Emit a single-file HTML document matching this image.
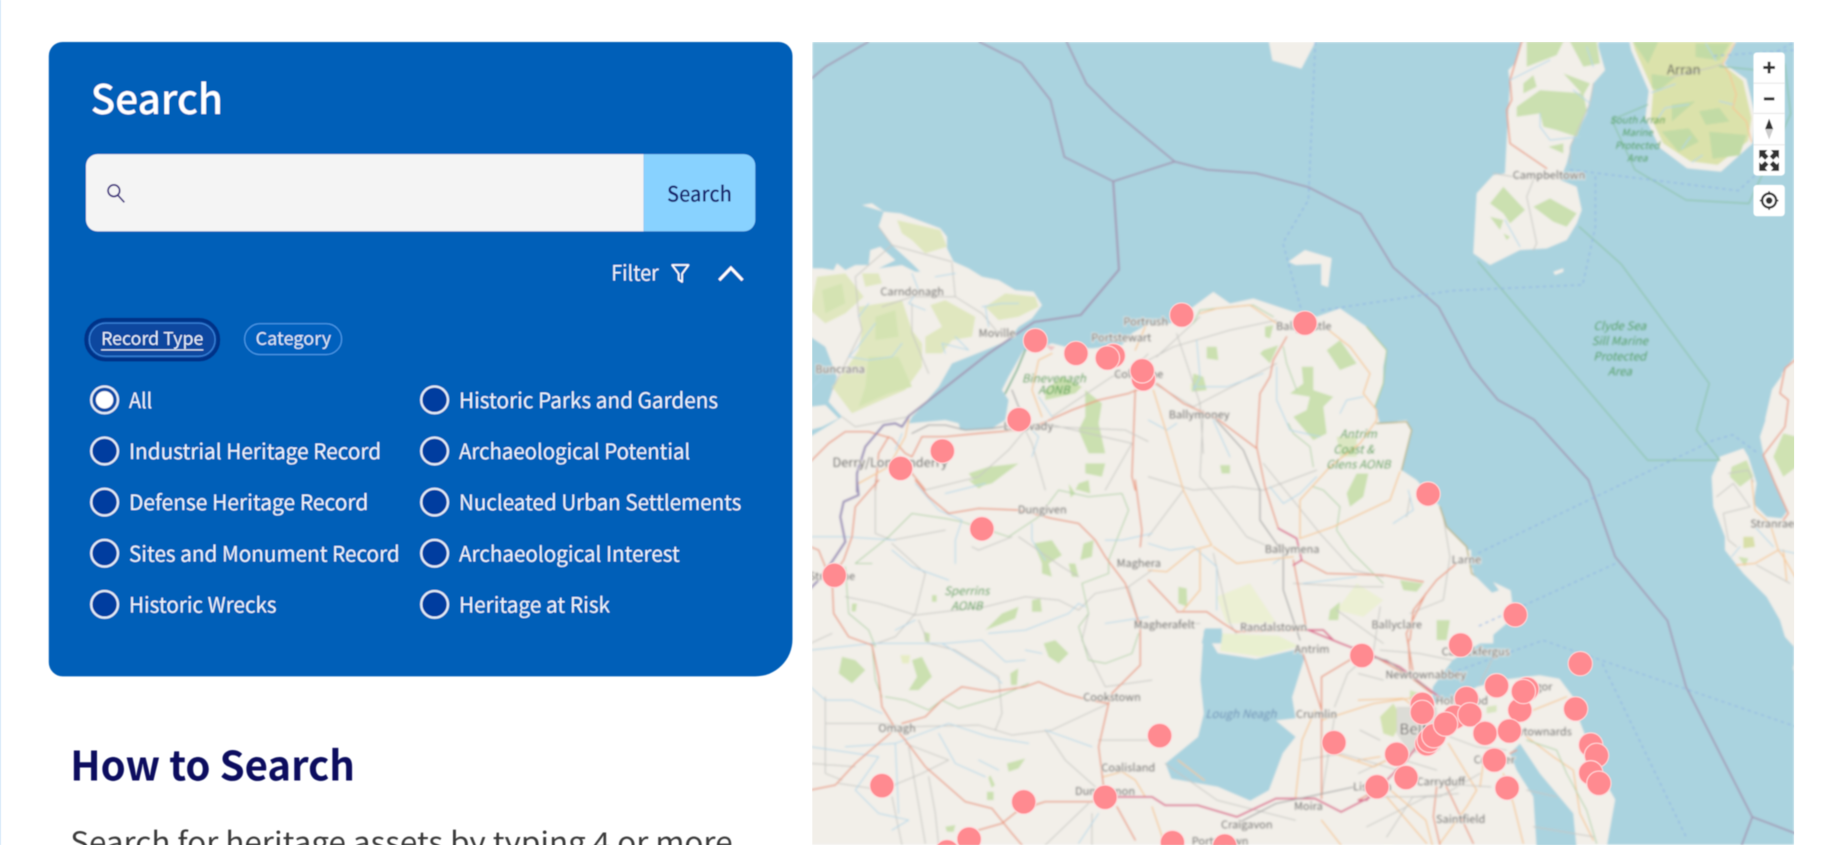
<!DOCTYPE html>
<html><head><meta charset="utf-8"><title>Search</title>
<style>
html,body{margin:0;padding:0;background:#fff;width:1822px;height:845px;overflow:hidden}
svg{display:block}
.z *{vector-effect:non-scaling-stroke;fill:none;stroke-linejoin:round;stroke-linecap:round}
text{font-family:"Noto Sans CJK JP","Liberation Sans",sans-serif}
.l{font-size:9.5px;fill:#4f4f4f;text-anchor:middle;stroke:#f2efe9;stroke-width:1.5px;paint-order:stroke}
.g{font-size:10px;fill:#3c9a3c;text-anchor:middle;font-style:italic}
.o{font-size:18px;fill:#eef4fb}
.rd{stroke:#ea9a80;stroke-width:1.4}
.pk{stroke:#dc6f92;stroke-width:1.8}
.or{stroke:#f5c894;stroke-width:1.3}
.gy{stroke:#c6c6c2;stroke-width:1}
.dg{stroke:#a3a3a3;stroke-width:1.2}
.bl{stroke:#b2d7e8;stroke-width:1}
.gn{stroke:#aed0a4;stroke-width:1}
</style></head><body>
<svg width="1822" height="845" viewBox="0 0 1568 727" xmlns="http://www.w3.org/2000/svg">
<defs>
<filter id="b" x="0" y="0" width="1" height="1"><feGaussianBlur stdDeviation="0.9"/></filter>
<filter id="b2" x="-5%" y="-5%" width="110%" height="110%"><feGaussianBlur stdDeviation="0.45"/></filter>
<clipPath id="mc"><rect x="699" y="36" width="845" height="691"/></clipPath>
</defs>
<rect width="1568" height="727" fill="#fff"/>
<rect x="0" y="0" width="1" height="727" fill="#dcecfa"/>

<g clip-path="url(#mc)">
<g filter="url(#b)">
<rect x="699" y="36" width="845" height="691" fill="#aad3df"/>

<!-- land base -->
<g fill="#f2efe9">
<rect x="698" y="413" width="292" height="314"/>
<rect x="989" y="540" width="210" height="187"/>
<path d="M1266 473L1266 488 1275 496 1300 508 1303 531 1283 548 1250 568 1233 591 1233 605 1256 600 1271 591 1293 585 1325 581 1342 584 1354 600 1360 622 1377 665 1390 688 1383 727 1190 727 1190 480Z"/>
<path d="M1092 36L1095 52 1120 59 1132 36Z"/>
<path d="M1109 225L1123 215 1146 222 1143 247 1137 245 1137 227 1115 228Z"/>
<path d="M1545 307L1525 335 1519 361 1525 361 1545 355Z"/>
<path d="M1543 575l2-8v14Z"/>
</g>

<!-- Arran -->
<g transform="translate(1342.500,34.400) scale(.2917)">
<path fill="#f2efe9" d="M205 5L520 5 485 70 550 115 578 230 568 305 475 388 375 378 295 318 252 230 262 150 210 30Z"/>
<path fill="#dbe2ab" d="M215 5L512 5 478 70 540 120 565 230 555 298 465 368 385 358 305 305 268 230 275 150 222 30Z"/>
<g fill="#c2dba5">
<path d="M270 100L340 110 290 150 272 140Z"/>
<path d="M330 190L400 180 330 240Z"/>
<path d="M300 270L380 260 410 300 350 330Z"/>
<path d="M410 210L470 200 500 240 430 250Z"/>
<path d="M440 270L550 280 530 340 450 350Z"/>
<path d="M400 10L500 10 470 60 400 50Z"/>
<path d="M215 5L290 5 260 70Z"/>
</g>
</g>
<g class="z" transform="translate(1342.500,34.400) scale(.2917)">
<path class="or" d="M515 10L480 70 500 100 520 160 510 200 550 240 565 300"/>
<path class="gy" d="M325 110L450 80 480 70"/>
<path class="bl" d="M270 155L340 130M290 230L310 200 380 190M510 190L470 180M430 10L460 60M360 320L385 285M390 360L420 340"/>
</g>

<!-- crop A: Inishowen & north coast -->
<g transform="translate(698.8,163.5) scale(.2868)">
<path fill="#f2efe9" d="M-5 235L30 235 65 240 75 220 100 240 130 225 170 225 175 180 205 170 250 210 200 235 270 225 310 245 325 245 300 220 240 165 200 110 215 65 150 45 180 40 215 65 265 70 385 115 405 140 405 175 425 215 470 235 510 260 560 270 610 300 665 305 690 345 660 385 620 410 590 450 520 480 420 520 380 590 320 660 300 680 290 700 345 695 400 690 440 700 445 720 540 715 580 690 590 630 570 600 590 560 635 480 660 480 720 460 760 470 840 475 930 465 960 430 1020 395 1025 910 -5 910Z"/>
<path fill="#aad3df" d="M-5 440L40 470 75 560 50 635 90 680 60 700 -5 740Z"/>
<path fill="#f2efe9" d="M-5 650L40 645 80 685 30 710 -5 720Z"/>
<g fill="#e0e7bf">
<path d="M255 90L385 120 405 170 340 190 300 150 270 130Z"/>
<path d="M15 260L100 250 155 320 100 370 40 400 -5 360Z"/>
<path d="M150 250L200 250 210 280 160 290Z"/>
<path d="M140 350L270 330 300 420 330 460 330 530 280 600 210 630 120 670 60 590 100 540 140 480 150 420Z"/>
<path d="M355 345L400 330 490 380 480 440 420 450 390 490 340 490 340 440 390 410Z"/>
<path d="M520 350L580 310 670 320 680 350 620 380 560 390Z"/>
</g>
<g fill="#d4e3b2">
<path d="M170 500L260 500 300 590 230 610 140 650 160 590Z"/>
<path d="M30 300L90 280 100 340 40 370Z"/>
<path d="M190 380L250 360 260 440 190 450Z"/>
</g>
<g fill="#cbe0b0">
<path d="M700 600L750 560 810 590 790 610 700 630Z"/>
<path d="M820 600L870 640 860 700 880 790 830 790 800 720 820 680Z"/>
<path d="M820 820L880 820 870 860 820 850Z"/>
<path d="M470 850L530 830 620 820 540 880 500 890Z"/>
<path d="M800 880L830 870 830 900 790 900Z"/>
</g>
<path fill="#eec4c4" d="M700 465l30 5-12 12Z"/>
</g>
<g class="z" transform="translate(698.8,163.5) scale(.2868)">
<path class="rd" d="M-5 815L50 760 100 725 170 725 240 745 280 790 300 800 330 740 400 740 500 730 620 720 690 700 780 660 860 630 950 610 1020 580M300 850L340 900M970 600L960 860 970 900M230 740L200 790 190 900"/>
<path class="gy" d="M640 720L660 760 700 900M640 720L590 780 500 860 340 900M700 700L960 760M720 710L940 720 1020 760M720 680L900 560 960 540M300 340L300 430 350 550M420 220L430 320 510 370 560 430M200 110L240 165 420 215M240 165L130 260 140 380 150 420 110 500 60 600M210 350L300 320 370 320 430 320M90 680L130 710 290 680M880 900L960 760M960 540L1020 480"/>
<path class="dg" d="M300 730L350 705 400 705 460 720 540 715 640 700M640 700L600 600"/>
<path class="bl" d="M300 250L320 300 290 340 340 360M170 340L140 380M190 400L130 480 110 500 170 510 240 500 270 460M370 260L430 250M430 440L470 480 390 460 400 490M510 350L570 340 620 340M520 350L530 410M640 700L680 740 660 800M30 560L-5 600M250 780L270 730M680 620L720 680"/>
<path class="or" d="M290 690L280 740 230 830 140 880M680 510L660 600 690 680M720 490L680 510M970 480L1000 410"/>
<path stroke="#6fae8b" stroke-width="1.6" d="M640 480L615 540 580 610"/>
</g>

<!-- crop C: NE Antrim -->
<g transform="translate(989.7,249.6) scale(.2868)">
<path fill="#f2efe9" d="M-5 100L60 100 130 50 190 5 240 40 310 25 430 65 500 80 570 55 650 110 710 180 700 230 700 280 675 350 690 400 770 390 785 420 755 540 800 570 870 650 890 710 950 770 965 850 1030 895 1030 1060 -5 1060Z"/>
<g fill="#ecf0d4">
<path d="M200 920L300 880 380 1000 230 1000Z"/>
<path d="M620 880L700 930 640 980 560 960Z"/>
<path d="M120 280L160 270 170 300 120 300Z"/>
</g>
<g fill="#cbe0b0">
<path d="M530 180L570 150 620 220 570 240Z"/>
<path d="M455 230L490 230 490 300 550 320 520 350 530 430 490 450 430 380 470 360 480 320 420 310 460 280Z"/>
<path d="M590 610L620 550 655 550 640 620 600 650Z"/>
<path d="M750 870L820 880 800 905 760 900Z"/>
<path d="M340 180L385 165 360 220 330 190Z"/>
<path d="M345 110L370 105 360 145 345 140Z"/>
<path d="M170 170L200 170 205 210 170 205Z"/>
<path d="M560 440L620 440 620 500 570 500Z" fill="#dbe7c2"/>
<path d="M210 525L240 525 240 550 215 550Z"/>
<path d="M130 250L160 260 170 300 125 305Z"/>
<path d="M540 960L570 935 565 990 535 990Z"/>
<path d="M85 890L110 895 112 950 85 940Z"/>
<path d="M860 990L900 990 890 1050 860 1050Z"/>
</g>
<path fill="#aad3df" d="M155 1060L165 1015 215 1015 220 1060Z"/>
</g>
<g class="z" transform="translate(989.7,249.6) scale(.2868)">
<path class="gy" d="M-5 210L70 170 240 120 380 90M150 80L20 200M80 130L150 340 160 490M-5 270L130 350 380 220M160 360L150 560 200 620 290 740 380 780M100 600L-5 740M340 520L510 730 610 840 700 860M880 680L900 800 880 930 780 970M430 880L620 890 700 890M780 620L770 680M-5 560L130 600 250 590 340 600 500 540M190 790L240 1000 270 1050M0 1010L150 1000M560 960L700 1060"/>
<path class="dg" d="M190 380L280 480 330 600 330 690 400 790 400 900 450 1050"/>
<path class="gn" d="M130 100L150 60 240 50 310 45 370 80M400 170L410 220 440 300M415 400L430 430 480 470 490 530M490 590L520 600 570 650 560 720 600 780 650 830 700 880"/>
<path stroke="#b6b07a" stroke-width="1.3" d="M680 400L770 395 785 420 755 540M870 650L890 710 950 770 965 850 1020 885"/>
<path stroke="#a8c98a" stroke-width="1" d="M650 110L710 180 700 280 675 350"/>
<path class="bl" d="M140 150L150 260 130 300M130 290L230 290 340 250M380 230L380 330 420 420 510 440M570 370L590 330 640 320M190 390L240 500M-5 390L50 420 80 400M360 590L400 640 450 610 500 560M730 700L790 660 775 600M-5 760L60 780 130 770 200 830 200 960M370 820L400 800M460 880L620 860"/>
<path class="or" d="M150 70L200 55 300 45 380 100M530 115L600 170 660 250 640 310 680 360 680 390 630 460 540 530 450 630 450 745M450 745L550 710 720 630 750 545M10 300L50 430 100 600 160 720 185 765 130 780 50 845 -5 840M190 770L260 820 340 810 430 800M150 780L150 900 100 960"/>
<path class="rd" d="M410 140L370 210 360 260 330 310 320 470 345 590 385 715M20 280L100 340 200 385 320 475M430 810L470 1020M455 810L530 850 700 855 820 875M920 820L860 870 790 960 780 1050M80 965L170 965 220 1000 260 1025 470 1020M-5 870L80 960"/>
<path class="pk" d="M385 715L440 745 455 810 430 825M470 1020L520 1020 550 1050"/>
</g>

<!-- crop B: Sperrins / Omagh -->
<g transform="translate(698.8,413.1) scale(.2868)" fill="#cbe0b0">
<path d="M665 190L720 180 750 225 710 250 720 290 690 280 690 250Z"/>
<path d="M770 250L790 250 800 290 780 290Z"/>
<path d="M815 190L845 180 840 230 805 240Z"/>
<path d="M520 450L570 400 620 380 610 415 560 435Z"/>
<path d="M660 360L685 355 690 395 660 395Z"/>
<path d="M695 490L730 480 770 520 740 550 710 530Z"/>
<path d="M300 540L330 530 360 590 320 630 290 630 315 590Z"/>
<path d="M80 580L90 530 130 540 160 570 120 610Z"/>
<path d="M585 850L640 835 620 865 590 875Z"/>
<path d="M470 0L540 0 500 25Z"/>
<path d="M800 30L830 0 835 40Z"/>
<path d="M360 345l14 0 0 20-14 0Z"/>
<path d="M120 370l15 0-4 24-12 0Z"/>
<path d="M525 935l20 0 0 25-20 0Z"/>
<path d="M535 885l14 30-10 8-10-30Z"/>
<path d="M400 1040l30-5-5 20-20 0Z"/>
<path d="M335 455l18 5 0 25-14 0Z"/>
<path d="M595 580l24 -15 -4 50 -18 0Z"/>
<path d="M770 10l20 30-14 12Z"/>
<path d="M265 525l30 0 -4 25-20 0Z" fill="#e6ecc4"/>
</g>
<g class="z" transform="translate(698.8,413.1) scale(.2868)">
<path class="gy" d="M240 190L340 280 310 400 250 470 180 495M100 350L200 370 310 405 520 380 640 350 740 360 800 390 850 340 950 320M-5 490L60 460M320 420L350 490 430 510 560 590 570 700 550 750M40 730L210 730 280 740 500 735 600 765 720 750 890 670M40 650L40 760 40 880 90 900M-5 850L130 860M80 910L210 930 330 880 410 840 280 790M290 800L340 1090M600 170L500 210 480 200M620 170L750 260 800 290M700 750L760 840 850 920M240 950L270 1095M860 780L1020 780M190 160L240 180 400 150M830 400L810 480 880 620 1020 600M190 0L190 160M1020 270L950 320 985 440M350 890L370 1000 380 1095M840 1000L840 1095M700 1095L830 970"/>
<path class="gn" d="M100 260L110 400 170 450 190 500M180 250L130 250 230 170 300 100 400 115 450 125 530 150 590 170 680 110 740 30 830 50 930 40 950 90 890 240 890 280 810 310 830 400 800 440 830 540 880 550 960 520 980 460M220 650L280 660 350 690 390 660 440 685 560 650 650 610M180 490L190 600 210 650"/>
<path class="bl" d="M310 10L380 90 450 120 430 180 430 250M-5 170L100 170 250 180M400 40L520 10M240 210L300 260 410 300M530 460L640 450 770 400 800 370 820 380M250 450L310 420M-5 510L180 490 400 490 510 480 580 545 640 540M390 490L550 590 570 610M690 520L640 510M660 130L660 180 700 240M880 180L930 180 1020 160M-5 620L40 660 120 660 210 700M100 800L250 790 410 730 530 770 650 790M-5 800L200 830 130 930 200 1000 290 1020 240 1050M380 760L430 850 520 890M700 750L840 800M500 840L560 870M880 430L1010 410M800 1090L860 1000M250 790L260 1000"/>
<path class="rd" d="M310 0L350 50 410 100 500 85 620 90 720 115 800 130 850 180 880 230 940 310 985 440 985 555 900 640 890 670 860 800 875 920M200 0L130 80 120 170 95 240 60 290 65 400 110 470 180 495 200 590 210 680 250 745 280 780 340 860 460 965 540 985 600 1060 630 1095M-5 200L20 210 40 260M-5 930L70 915 130 850 240 755M270 730L340 710 390 660 450 620 540 635 640 620 680 605 760 640 830 660 890 670M500 1050L570 1030 620 990 700 965 840 965 880 950M970 0L990 150 985 200M915 980L970 1080"/>
<path class="or" d="M875 890L930 875 970 900 1000 950"/>
</g>

<!-- crop D: Kintyre -->
<g transform="translate(1256.5,34.4) scale(.2868)">
<path fill="#f2efe9" d="M187 0L165 70 145 90 150 130 140 300 135 400 100 405 50 460 40 640 90 675 180 630 260 625 320 600 350 550 365 510 350 440 300 420 320 370 335 310 380 220 400 130 435 90 415 20 415 0Z"/>
<g fill="#cbe0b0">
<path d="M200 5L310 5 290 45 200 80Z"/>
<path d="M330 5L410 5 420 70 370 80Z"/>
<path d="M170 200L240 150 370 160 380 210 350 290 290 270 250 260 240 220 170 230Z"/>
<path d="M310 100L390 130 370 165Z"/>
<path d="M265 320L310 310 310 340Z"/>
<path d="M220 500L270 475 350 520 320 560 280 545Z"/>
<path d="M90 490L130 440 195 510 150 550 130 520Z"/>
<path d="M90 530L130 540 120 570Z"/>
<path d="M130 580L150 590 140 600Z"/>
<path d="M190 130L220 105 230 140 190 160Z"/>
</g>
<path fill="#f2efe9" d="M280 695L310 685 310 695 285 705Z"/>
</g>
<g class="z" transform="translate(1256.5,34.4) scale(.2868)">
<path class="rd" d="M185 5L150 120 155 180 140 210 150 310 260 385"/>
<path class="gy" d="M400 130L390 190 330 320 330 370M100 400L160 410 300 405M220 420L200 470 230 610 220 630"/>
<path class="bl" d="M150 120L270 60M340 150L390 190M240 220L240 260 270 300 360 290M135 540L180 620M380 20L400 80"/>
</g>

<!-- crop E: Rhins of Galloway -->
<g transform="translate(1428.6,292.6) scale(.2868)">
<path fill="#f2efe9" d="M155 410L180 350 250 325 265 350 290 430 280 490 320 530 365 535 380 515 345 430 310 340 300 290 330 200 370 160 365 100 405 50 420 50 420 940 375 890 360 840 320 770 250 700 195 630 195 590 160 500Z"/>
<g fill="#cfe2b2">
<path d="M340 350L370 280 410 290 410 380 370 410Z"/>
<path d="M215 380L260 360 280 410 240 440 210 410Z"/>
<path d="M250 590L280 590 285 620 250 625Z" fill="#d8dfa8"/>
<path d="M235 650l30 5-10 25Z"/>
</g>
</g>
<g class="z" transform="translate(1428.6,292.6) scale(.2868)">
<path class="rd" d="M405 60L375 85 360 160 385 180 375 260 310 345 345 430 385 520 370 540"/>
<path class="or" d="M275 420L285 510 330 550 355 630 285 670 230 675M355 630L370 650 405 710M370 630L380 720"/>
<path class="gy" d="M205 400L265 390 280 425M170 470L220 430 270 500 190 520 205 600 230 620M290 675L390 730"/>
<path class="bl" d="M215 650L240 620M285 560L340 620M360 630L405 640"/>
</g>

<!-- Ards / Belfast -->
<g transform="translate(1170.4,550.8) scale(.2868)">
<path fill="#aad3df" d="M480 310L540 400 640 520 650 625 530 625 520 470 470 390 450 340Z"/>
<path fill="#d3e2b0" d="M60 230L100 190 130 240 100 290 70 280Z"/>
<path fill="#dcdcd6" d="M110 200L230 200 240 330 150 340 110 280Z"/>
<path fill="#d5e3b6" d="M150 150L180 160 170 190 150 180Z"/>
<path fill="#d8e5c0" d="M380 200l30-5 0 20-30 5Z"/>
</g>
<g class="z" transform="translate(1170.4,550.8) scale(.2868)">
<path class="or" d="M-5 180L130 175 150 190M520 210L620 170M500 290L580 350 640 390 660 520 700 600M265 310L350 450 320 500 240 610M370 370L360 440M-5 360L60 350M80 470L200 610M430 400L460 490 490 610"/>
<path class="rd" d="M45 50L150 110 215 160M230 440L220 530 240 615M250 420L340 610M145 0L150 100M-5 480L30 460M470 330L450 340"/>
<path class="gn" d="M500 300L590 330 620 400 680 510 710 610"/>
<path class="gy" d="M-5 400L100 350 230 390M270 290L350 320 440 330M30 470L240 470 360 400M20 560L200 470M0 270L60 300M-5 100L70 120M400 50L360 130M520 560L700 590M500 450L590 470"/>
<path class="pk" d="M-5 480L20 480 55 440"/>
</g>

<!-- remaining roads, Lough Neagh area -->
<g fill="#aad3df">
<path d="M1036 542L1048 562 1081 567 1115 559 1123 565 1112 600 1115 618 1098 620 1115 634 1104 648 1092 680 1076 689 1048 677 1008 670 1003 657 1031 634 1036 614 1033 585Z"/>
<path d="M1266 478l10 10 14 20-6 2-16-16Z"/>
</g>
<path fill="#e9f0d0" d="M1052 545L1100 547 1118 556 1085 565 1050 560Z"/>
<g class="z" transform="translate(688.5,361.4) scale(.561,.287)">
<path class="gy" d="M770 1020L830 1000 900 1040 980 1090 1060 1100M900 1250L940 1130 1010 1120M890 690L950 700 1000 720M890 560L880 690 840 760 820 860M820 890L810 1010 800 1130M640 1140L760 1200M560 1030L640 1140"/>
<path class="or" d="M760 1135L770 960 790 870M800 900L880 850 950 830M820 1000L880 1040 920 1000M800 1200L830 1275M540 1160L560 1275M900 1100L960 1200 970 1275M580 1020L620 1080"/>
<path class="rd" d="M770 690L800 870 800 1135M860 700L800 770 800 870M960 520L930 640 940 750"/>
<path class="pk" d="M780 630L830 670 870 700 920 740 960 800 980 830M470 1130L540 1130 560 1155 610 1155 670 1190 730 1135 790 1135 830 1175 870 1135 890 1100 930 1020 950 970"/>
<path class="dg" d="M850 700L900 720 960 800M670 1210L730 1150 850 1100"/>
</g>

<!-- boundaries -->
<g fill="none" stroke="#a299b5" stroke-width="1.5" stroke-linejoin="round" stroke-linecap="round">
<path d="M699 67L711 57 747 36"/>
<path d="M843 36L879 54 904 86 916 135 958 156 1011 139 958 95 935 72 918 36"/>
<path d="M958 156L963 232 930 271 890 277 851 304 782 358" stroke-width="1.8"/>
<path d="M1011 139L1039 146 1081 149 1126 161 1171 184 1199 230 1238 264 1266 316 1289 344 1320 361 1367 413 1390 479 1435 534 1451 591 1508 703 1545 717M1508 703L1499 727"/>
</g>
<g class="z" transform="translate(698.8,163.5) scale(.2868)">
<path stroke="#9a8fb8" stroke-width="2.2" d="M290 680L270 710 250 700 215 705 160 770 135 850 135 905"/>
</g>
<g class="z" transform="translate(698.8,413.1) scale(.2868)">
<path stroke="#9a8fb8" stroke-width="2.2" d="M135 0L140 45 95 65 85 110 100 185 70 230 30 290 -5 325"/>
</g>

<!-- protected area green lines -->
<g class="z">
<path stroke="#8dc3a8" stroke-width="1.2" d="M1272 225L1418 396 1480 396 1460 370 1471 330 1395 227 1359 195"/>
<path stroke="#8dc3a8" stroke-width="1.2" d="M1418 90L1387 103 1407 146 1451 172 1505 175 1541 98 1536 55M1480 57L1510 60"/>
</g>

<!-- maritime dashes -->
<g fill="none" stroke="#8fb4e4" stroke-width="1" stroke-dasharray="3 3">
<path d="M1132 36L1126 172 1104 209 1120 267"/>
<path d="M1137 267L1250 250 1362 245 1373 195 1373 149"/>
<path d="M1351 146L1496 164 1519 143"/>
<path d="M1272 476L1474 379 1491 374 1513 390M1519 50L1544 36"/>
<path d="M1328 551L1545 625M1249 579L1328 551M1390 485L1272 539M1379 571L1451 720"/>
<path d="M1475 48l70 -5"/>
</g>

<!-- labels -->
<text class="l" x="1449" y="64" style="font-size:11.500px;stroke:none;fill:#555">Arran</text>
<text class="g" x="1409" y="106" style="font-size:8.500px">South Arran</text>
<text class="g" x="1409" y="117" style="font-size:8.500px">Marine</text>
<text class="g" x="1409" y="128" style="font-size:8.500px">Protected</text>
<text class="g" x="1409" y="139" style="font-size:8.500px">Area</text>
<text class="l" x="1333" y="154">Campbeltown</text>
<text class="g" x="1394" y="284">Clyde Sea</text>
<text class="g" x="1394" y="297">Sill Marine</text>
<text class="g" x="1394" y="310">Protected</text>
<text class="g" x="1394" y="323">Area</text>
<text class="l" x="785" y="254">Carndonagh</text>
<text class="l" x="858" y="290">Moville</text>
<text class="l" x="723" y="321">Buncrana</text>
<text class="l" x="986" y="280">Portrush</text>
<text class="l" x="965" y="294">Portstewart</text>
<text class="l" x="1122" y="284">Ballycastle</text>
<text class="l" x="980" y="325">Coleraine</text>
<text class="l" x="1032" y="360">Ballymoney</text>
<text class="l" x="885" y="370">Limavady</text>
<text class="g" x="907" y="329">Binevenagh</text>
<text class="g" x="907" y="339">AONB</text>
<text class="g" x="1169" y="377">Antrim</text>
<text class="g" x="1165" y="390">Coast &amp;</text>
<text class="g" x="1169" y="403">Glens AONB</text>
<text class="l" x="766" y="402" style="font-size:11px">Derry/Londonderry</text>
<text class="l" x="897" y="442">Dungiven</text>
<text class="l" x="1112" y="476">Ballymena</text>
<text class="l" x="980" y="488">Maghera</text>
<text class="l" x="1262" y="485">Larne</text>
<text class="l" x="716" y="499">Strabane</text>
<text class="l" x="1527" y="454">Stranraer</text>
<text class="g" x="832" y="512">Sperrins</text>
<text class="g" x="832" y="525">AONB</text>
<text class="l" x="1002" y="541">Magherafelt</text>
<text class="l" x="1096" y="543">Randalstown</text>
<text class="l" x="1202" y="541">Ballyclare</text>
<text class="l" x="1129" y="562">Antrim</text>
<text class="l" x="1270" y="564">Carrickfergus</text>
<text class="l" x="1227" y="584">Newtownabbey</text>
<text class="l" x="1258" y="606">Holywood</text>
<text class="l" x="1320" y="594">Bangor</text>
<text class="l" x="957" y="603">Cookstown</text>
<text class="l" x="772" y="630">Omagh</text>
<text class="l" x="1133" y="618">Crumlin</text>
<text class="g" x="1068" y="618" style="fill:#6b8fb5">Lough Neagh</text>
<text class="l" x="1225" y="632" style="font-size:13px">Belfast</text>
<text class="l" x="1322" y="633">Newtownards</text>
<text class="l" x="971" y="664">Coalisland</text>
<text class="l" x="1286" y="657">Comber</text>
<text class="l" x="1240" y="676">Carryduff</text>
<text class="l" x="951" y="684">Dungannon</text>
<text class="l" x="1181" y="680">Lisburn</text>
<text class="l" x="1126" y="697">Moira</text>
<text class="l" x="1257" y="708">Saintfield</text>
<text class="l" x="1073" y="713">Craigavon</text>
<text class="l" x="1050" y="727">Portadown</text>
</g>

<!-- controls -->
<g filter="url(#b2)">
<rect x="1509" y="45" width="27" height="106" rx="3" fill="#fff"/>
<rect x="1509" y="71" width="27" height="1" fill="#e8e8e8"/>
<rect x="1509" y="97" width="27" height="1" fill="#e8e8e8"/>
<rect x="1509" y="124" width="27" height="1" fill="#e8e8e8"/>
<path d="M1522.500 53v10M1517.500 58h10M1518 85h9" fill="none" stroke="#333" stroke-width="2.500"/>
<path d="M1522.500 102l-3.500 9h7z" fill="#333"/><path d="M1522.500 120l-3.500-9h7z" fill="#ccc"/>
<g fill="#333">
<path d="M1514 129h7l-2 2.500 3 3-3 3-3-3-2 2z"/>
<path d="M1531 129h-7l2 2.500-3 3 3 3 3-3 2 2z"/>
<path d="M1514 147h7l-2-2.500 3-3-3-3-3 3-2-2z"/>
<path d="M1531 147h-7l2-2.500-3-3 3-3 3 3 2-2z"/>
</g>
<rect x="1509" y="159" width="27" height="27" rx="3" fill="#fff"/>
<circle cx="1522.500" cy="172.500" r="6" fill="none" stroke="#333" stroke-width="2"/>
<circle cx="1522.500" cy="172.500" r="2.800" fill="#333"/>
<path d="M1522.500 164.500v2M1522.500 178.500v2M1514.500 172.500h2M1528.500 172.500h2" stroke="#333" stroke-width="1.500"/>
</g>

<!-- markers -->
<g fill="#ff8a90" stroke="#ffd7d9" stroke-width="1" filter="url(#b2)">
<circle cx="1017" cy="271" r="10.500"/><circle cx="1123" cy="278" r="10.500"/><circle cx="891" cy="293" r="10.500"/><circle cx="926" cy="304" r="10.500"/><circle cx="958" cy="306" r="10.500"/><circle cx="953" cy="308" r="10.500"/><circle cx="984" cy="326" r="10.500"/><circle cx="983" cy="319" r="10.500"/><circle cx="877" cy="361" r="10.500"/><circle cx="811" cy="388" r="10.500"/><circle cx="775" cy="403" r="10.500"/><circle cx="845" cy="455" r="10.500"/><circle cx="718" cy="495" r="10.500"/><circle cx="1229" cy="425" r="10.500"/><circle cx="1304" cy="529" r="10.500"/><circle cx="1257" cy="555" r="10.500"/><circle cx="1172" cy="564" r="10.500"/><circle cx="1360" cy="571" r="10.500"/><circle cx="1288" cy="590" r="10.500"/><circle cx="1314" cy="593" r="10.500"/><circle cx="1308" cy="611" r="10.500"/><circle cx="1311" cy="595" r="10.500"/><circle cx="1356" cy="610" r="10.500"/><circle cx="1262" cy="601" r="10.500"/><circle cx="1224" cy="606" r="10.500"/><circle cx="1224" cy="613" r="10.500"/><circle cx="1252" cy="617" r="10.500"/><circle cx="1265" cy="615" r="10.500"/><circle cx="1228" cy="640" r="10.500"/><circle cx="1230" cy="637" r="10.500"/><circle cx="1234" cy="633" r="10.500"/><circle cx="1244" cy="623" r="10.500"/><circle cx="1278" cy="631" r="10.500"/><circle cx="1299" cy="629" r="10.500"/><circle cx="1148" cy="639" r="10.500"/><circle cx="998" cy="633" r="10.500"/><circle cx="1202" cy="649" r="10.500"/><circle cx="1369" cy="641" r="10.500"/><circle cx="1374" cy="650" r="10.500"/><circle cx="1286" cy="654" r="10.500"/><circle cx="1369" cy="665" r="10.500"/><circle cx="1376" cy="674" r="10.500"/><circle cx="1210" cy="669" r="10.500"/><circle cx="1185" cy="677" r="10.500"/><circle cx="1297" cy="678" r="10.500"/><circle cx="759" cy="676" r="10.500"/><circle cx="881" cy="690" r="10.500"/><circle cx="951" cy="686" r="10.500"/><circle cx="815" cy="733" r="10.500"/><circle cx="834" cy="722" r="10.500"/><circle cx="1009" cy="725" r="10.500"/><circle cx="1054" cy="728" r="10.500"/>
</g>
</g>

<!-- search panel -->
<g filter="url(#b2)">
<path d="M54 36H670a12 12 0 0 1 12 12V550a32 32 0 0 1-32 32H54a12 12 0 0 1-12-12V48a12 12 0 0 1 12-12Z" fill="#005eb8"/>
<text x="78" y="98" font-size="35" font-weight="500" fill="#fff" textLength="114" lengthAdjust="spacingAndGlyphs">Search</text>
<path d="M84 132.500H554V199H84a10 10 0 0 1-10-10V142.500a10 10 0 0 1 10-10Z" fill="#f4f4f4"/>
<path d="M554 132.500H640a10 10 0 0 1 10 10V189a10 10 0 0 1-10 10H554Z" fill="#88d2ff"/>
<circle cx="98" cy="164" r="5" fill="none" stroke="#3c2e7e" stroke-width="1.500"/>
<path d="M101.500 168l5.500 6" stroke="#3c2e7e" stroke-width="1.500"/>
<text x="574" y="173.500" font-size="18" font-weight="500" fill="#14206e" textLength="56" lengthAdjust="spacingAndGlyphs">Search</text>
<text x="526" y="241.500" class="o" textLength="41" lengthAdjust="spacingAndGlyphs">Filter</text>
<path d="M578.500 228h14l-5.500 7.500v7l-3-2v-5z" fill="none" stroke="#fff" stroke-width="1.500" stroke-linejoin="round"/>
<path d="M619 241l10-10.500 10 10.500" fill="none" stroke="#fff" stroke-width="2.500"/>
<rect x="74" y="275" width="114" height="34.500" rx="17" fill="#0a479f" stroke="#003087" stroke-width="3"/>
<rect x="77" y="278" width="108" height="28.500" rx="14" fill="none" stroke="#3b86dc" stroke-width="1"/>
<text x="87" y="297" font-size="15.500" fill="#e6effa" textLength="88" lengthAdjust="spacingAndGlyphs">Record Type</text>
<rect x="87" y="300.500" width="88" height="1" fill="#e6effa"/>
<rect x="210.500" y="278.500" width="83.500" height="26.500" rx="13.250" fill="#0561bd" stroke="#4c9be8" stroke-width="1"/>
<text x="220" y="297" font-size="15.500" fill="#dce9f7" textLength="65" lengthAdjust="spacingAndGlyphs">Category</text>
<g fill="#003e9f" stroke="#e2ebf6" stroke-width="2">
<circle cx="90" cy="344" r="11.500" fill="#0a4ba6"/><circle cx="374" cy="344" r="11.500"/>
<circle cx="90" cy="388" r="11.500"/><circle cx="374" cy="388" r="11.500"/>
<circle cx="90" cy="432" r="11.500"/><circle cx="374" cy="432" r="11.500"/>
<circle cx="90" cy="476" r="11.500"/><circle cx="374" cy="476" r="11.500"/>
<circle cx="90" cy="520" r="11.500"/><circle cx="374" cy="520" r="11.500"/>
</g>
<circle cx="90" cy="344" r="7.500" fill="#fff"/>
<text class="o" x="111" y="351" textLength="20" lengthAdjust="spacingAndGlyphs">All</text>
<text class="o" x="111" y="395" textLength="217" lengthAdjust="spacingAndGlyphs">Industrial Heritage Record</text>
<text class="o" x="111" y="439" textLength="206" lengthAdjust="spacingAndGlyphs">Defense Heritage Record</text>
<text class="o" x="111" y="483" textLength="233" lengthAdjust="spacingAndGlyphs">Sites and Monument Record</text>
<text class="o" x="111" y="527" textLength="127" lengthAdjust="spacingAndGlyphs">Historic Wrecks</text>
<text class="o" x="395" y="351" textLength="223" lengthAdjust="spacingAndGlyphs">Historic Parks and Gardens</text>
<text class="o" x="395" y="395" textLength="199" lengthAdjust="spacingAndGlyphs">Archaeological Potential</text>
<text class="o" x="395" y="439" textLength="243" lengthAdjust="spacingAndGlyphs">Nucleated Urban Settlements</text>
<text class="o" x="395" y="483" textLength="190" lengthAdjust="spacingAndGlyphs">Archaeological Interest</text>
<text class="o" x="395" y="527" textLength="130" lengthAdjust="spacingAndGlyphs">Heritage at Risk</text>
<text x="60.500" y="671.500" font-size="35" font-weight="700" fill="#07105e" textLength="245" lengthAdjust="spacingAndGlyphs">How to Search</text>
<text x="60.500" y="734" font-size="25" fill="#3a3a3a" textLength="570" lengthAdjust="spacingAndGlyphs">Search for heritage assets by typing 4 or more</text>
</g>
</svg>
</body></html>
